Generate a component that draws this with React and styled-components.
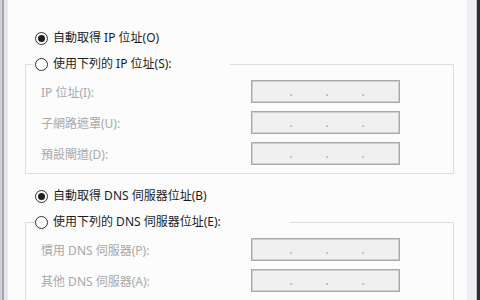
import React from "react";
import styled, { createGlobalStyle } from "styled-components";

const Global = createGlobalStyle`
  html, body { margin: 0; padding: 0; height: 100%; overflow: hidden; background: #fcfcfc; }
  #root { height: 100%; }
`;

const Window = styled.div`
  display: flex;
  height: 300px;
  width: 480px;
  font-family: "Noto Sans", "Noto Sans CJK TC", sans-serif;
  font-size: 12px;
`;

const LeftEdge = styled.div`
  width: 8px;
  flex: none;
  background: linear-gradient(to right, #d2d2d6 0 2px, #a6a6ab 2px 4px, #e7e7eb 4px 8px);
`;

const RightEdge = styled.div`
  width: 13px;
  flex: none;
  background: linear-gradient(to right, #efeff2 0 9px, #c4c4c8 9px 10px, #2c2c31 10px 13px);
`;

const Content = styled.div`
  flex: 1;
  background: #fcfcfc;
  padding: 28px 1px 0 17px;
  display: flex;
  flex-direction: column;
`;

const RadioRow = styled.label`
  display: flex;
  align-items: center;
  height: 20px;
  padding-left: 10px;
  gap: 5px;
  color: #1c1c1c;
  line-height: 20px;
  white-space: nowrap;
  margin-top: ${(p) => p.$mt || 0}px;
`;

const RadioCircle = styled.span`
  width: 13px;
  height: 13px;
  box-sizing: border-box;
  border-radius: 50%;
  border: 1px solid #333;
  background: #fcfcfc;
  display: flex;
  align-items: center;
  justify-content: center;
  flex: none;
  &::after {
    content: "";
    width: 7px;
    height: 7px;
    border-radius: 50%;
    background: ${(p) => (p.$checked ? "#1f1f1f" : "transparent")};
  }
`;

const Group = styled.fieldset`
  margin: 6px 0 0 0;
  width: 429px;
  box-sizing: border-box;
  border: 1px solid #dedee0;
  padding: 5px 0 9px 0;
  display: flex;
  flex-direction: column;
  gap: 8px;
`;

const Legend = styled.legend`
  margin-left: 8px;
  padding: 0;
  width: ${(p) => p.$w}px;
  height: 20px;
`;

const LegendRadio = styled(RadioRow)`
  padding-left: 1px;
`;

const FieldRow = styled.div`
  display: grid;
  grid-template-columns: 210px 149px;
  align-items: center;
  padding-left: 15px;
  height: 23px;
`;

const FieldLabel = styled.span`
  color: #a8a8a8;
  line-height: 23px;
  padding-top: 2px;
  white-space: nowrap;
`;

const IpBox = styled.div`
  box-sizing: border-box;
  height: 23px;
  width: 149px;
  border: 1px solid #a9a9ab;
  box-shadow: inset 0 0 0 1px #cfcfd1;
  background: #f0f0f1;
  display: flex;
  align-items: flex-end;
  padding-left: 37px;
  gap: 32px;
`;

const Dot = styled.span`
  width: 4px;
  text-align: center;
  color: #a2a2a4;
  font-size: 12px;
  line-height: 15px;
  margin-bottom: 3px;
`;

const Ip = () => (
  <IpBox>
    <Dot>.</Dot>
    <Dot>.</Dot>
    <Dot>.</Dot>
  </IpBox>
);

const Field = ({ label }) => (
  <FieldRow>
    <FieldLabel>{label}</FieldLabel>
    <Ip />
  </FieldRow>
);

export default function App() {
  return (
    <>
      <Global />
      <Window>
        <LeftEdge />
        <Content>
          <RadioRow>
            <RadioCircle $checked />
            自動取得 IP 位址(O)
          </RadioRow>
          <Group>
            <Legend $w={196}>
              <LegendRadio>
                <RadioCircle />
                使用下列的 IP 位址(S):
              </LegendRadio>
            </Legend>
            <Field label="IP 位址(I):" />
            <Field label="子網路遮罩(U):" />
            <Field label="預設閘道(D):" />
          </Group>
          <RadioRow $mt={12}>
            <RadioCircle $checked />
            自動取得 DNS 伺服器位址(B)
          </RadioRow>
          <Group>
            <Legend $w={256}>
              <LegendRadio>
                <RadioCircle />
                使用下列的 DNS 伺服器位址(E):
              </LegendRadio>
            </Legend>
            <Field label="慣用 DNS 伺服器(P):" />
            <Field label="其他 DNS 伺服器(A):" />
          </Group>
        </Content>
        <RightEdge />
      </Window>
    </>
  );
}
